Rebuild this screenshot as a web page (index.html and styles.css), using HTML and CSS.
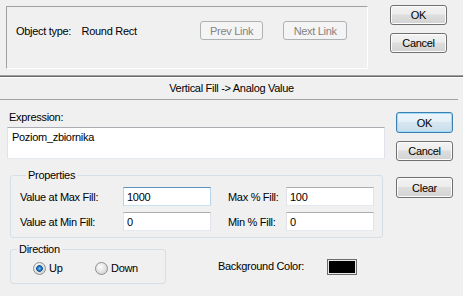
FILE: index.html
```html
<!DOCTYPE html>
<html lang="en">
<head>
  <meta charset="UTF-8" />
  <title>Vertical Fill -&gt; Analog Value</title>
  <link rel="stylesheet" href="styles.css">
</head>
<body>

<!-- Link bar -->
<div class="link-bar">
  <div class="link-frame">
    <div class="link-row">
      <span class="obj-label">Object type:</span>
      <span class="obj-value">Round Rect</span>
      <button class="btn link-btn" disabled>Prev Link</button>
      <button class="btn link-btn" disabled>Next Link</button>
    </div>
  </div>
  <div class="btn-col top-btns">
    <button class="btn btn-ok">OK</button>
    <button class="btn btn-cancel">Cancel</button>
  </div>
</div>

<div class="title-bar">Vertical Fill -&gt; Analog Value</div>

<!-- Editor -->
<div class="editor">
  <div class="editor-left">
    <div class="expr-label">Expression:</div>
    <textarea class="expr" spellcheck="false">Poziom_zbiornika</textarea>

    <fieldset class="group props">
      <legend>Properties</legend>
      <div class="prop-row">
        <label class="lbl-a">Value at Max Fill:</label>
        <input class="field hot" type="text" value="1000">
        <label class="lbl-b">Max % Fill:</label>
        <input class="field" type="text" value="100">
      </div>
      <div class="prop-row">
        <label class="lbl-a">Value at Min Fill:</label>
        <input class="field" type="text" value="0">
        <label class="lbl-b">Min % Fill:</label>
        <input class="field" type="text" value="0">
      </div>
    </fieldset>

    <div class="bottom-row">
      <fieldset class="group direction">
        <legend>Direction</legend>
        <div class="radio-row">
          <label class="radio"><input type="radio" name="dir" checked>Up</label>
          <label class="radio"><input type="radio" name="dir">Down</label>
        </div>
      </fieldset>
      <span class="bg-label">Background Color:</span>
      <span class="swatch"></span>
    </div>
  </div>

  <div class="btn-col side-btns">
    <button class="btn btn-ok default">OK</button>
    <button class="btn btn-cancel">Cancel</button>
    <button class="btn btn-clear">Clear</button>
  </div>
</div>

</body>
</html>
```

FILE: styles.css
```css
* {
  box-sizing: border-box;
}

body {
  margin: 0;
  width: 463px;
  height: 296px;
  overflow: hidden;
  background-color: #f0f0f0;
  font-family: "Liberation Sans", Arial, sans-serif;
  font-size: 11px;
  letter-spacing: -0.3px;
  color: #000;
}

button, input, textarea {
  font: inherit;
  letter-spacing: inherit;
  color: inherit;
}

/* top link bar */
.link-bar {
  display: flex;
  height: 75px;
  padding: 5px 0 0 6px;
}

.link-frame {
  margin-top: 1px;
  width: 362px;
  height: 63px;
  border: 1px solid;
  border-color: #a0a0a0 #fff #fff #a0a0a0;
  padding: 14px 0 0 9px;
}

.link-row {
  display: flex;
  align-items: center;
  height: 19px;
}

.obj-label {
  width: 66px;
}

.obj-value {
  width: 119px;
}

.link-btn {
  width: 64px;
  height: 19px;
  margin-right: 20px;
}

.btn-col {
  display: flex;
  flex-direction: column;
  width: 57px;
}

.top-btns {
  margin-left: 22px;
}

.top-btns .btn-ok {
  height: 20px;
}

.top-btns .btn-cancel {
  height: 20px;
  margin-top: 8px;
}

/* buttons */
.btn {
  display: flex;
  align-items: center;
  justify-content: center;
  padding: 0;
  border: 1px solid #707070;
  border-radius: 3px;
  background: linear-gradient(#f3f3f3, #ececec 45%, #dedede 50%, #d3d3d3);
  box-shadow: inset 0 0 0 1px #fcfcfc;
}

.btn:disabled {
  border-color: #adb2b5;
  background: #f4f4f4;
  box-shadow: none;
  color: #838383;
}

.btn.default {
  border-color: #3c7fb1;
  box-shadow: inset 0 0 0 1px #9edcf7;
  background: linear-gradient(#eef6fb, #e4eff7 45%, #d6e6f1 50%, #cadeec);
}

/* title */
.title-bar {
  height: 24px;
  border-top: 1px solid #a0a0a0;
  box-shadow: inset 0 1px #696969, inset 0 2px #fff;
  padding-top: 6px;
  line-height: 13px;
  text-align: center;
}

/* editor */
.editor {
  display: flex;
  width: 458px;
  border-top: 1px solid #a0a0a0;
}

.editor-left {
  margin-left: 7px;
  width: 378px;
  padding-top: 11px;
}

.expr-label {
  line-height: 13px;
  padding-left: 2px;
  margin-bottom: 3px;
}

.expr {
  display: block;
  margin: 0;
  width: 378px;
  height: 32px;
  padding: 3px 4px;
  border: 1px solid;
  border-color: #abadb3 #e2e3ea #e3e9ef;
  background: #fff;
  line-height: 13px;
  resize: none;
  overflow: hidden;
  outline: none;
}

.group {
  margin: 0;
  padding: 0;
  min-width: 0;
  border: 1px solid #d5dfe5;
  border-radius: 3px;
}

.group legend {
  margin-left: 6px;
  padding: 0 2px;
  line-height: 12px;
}

.props {
  margin: 10px 0 0 3px;
  width: 373px;
  padding: 6px 0 6px 9px;
}

.prop-row {
  display: flex;
  align-items: center;
  height: 19px;
}

.prop-row + .prop-row {
  margin-top: 6px;
}

.lbl-a {
  width: 103px;
}

.lbl-b {
  width: 58px;
  margin-left: 17px;
}

.field {
  width: 88px;
  height: 19px;
  margin: 0;
  padding: 0 3px;
  border: 1px solid;
  border-color: #abadb3 #e2e3ea #e3e9ef;
  background: #fff;
  outline: none;
}

.field.hot {
  border-color: #5794bf #b7d5ea #c7e2f1;
}

.bottom-row {
  display: flex;
  align-items: flex-start;
  margin-top: 5px;
}

.direction {
  margin-left: 3px;
  width: 156px;
  padding: 6px 0 8px 0;
}

.radio-row {
  display: flex;
  align-items: center;
  height: 14px;
  padding-left: 22px;
}

.radio {
  display: flex;
  align-items: center;
  width: 62px;
}

.radio input {
  appearance: none;
  width: 13px;
  height: 13px;
  margin: 0 3px 0 0;
  border: 1px solid #8e8f8f;
  border-radius: 50%;
  background: radial-gradient(circle at 40% 35%, #fff, #d8d8d8 70%, #eaeaea);
}

.radio input:checked {
  background:
    radial-gradient(circle at 50% 50%, #7fcdf5 0, #2a8ad4 1.5px, #0f4f9a 3px, #c9c9c9 3.5px, transparent 4px),
    radial-gradient(circle at 40% 35%, #fff, #d8d8d8 70%, #eaeaea);
}

.bg-label {
  margin: 17px 0 0 52px;
  width: 109px;
  line-height: 13px;
}

.swatch {
  margin-top: 16px;
  width: 30px;
  height: 16px;
  border: 1px solid #6d6d6d;
  box-shadow: inset 0 0 0 1px #e8e8e8;
  background: #000;
}

.side-btns {
  margin-left: 11px;
  padding-top: 12px;
}

.side-btns .btn-ok {
  height: 21px;
}

.side-btns .btn-cancel {
  height: 20px;
  margin-top: 8px;
}

.side-btns .btn-clear {
  height: 21px;
  margin-top: 16px;
}
```
